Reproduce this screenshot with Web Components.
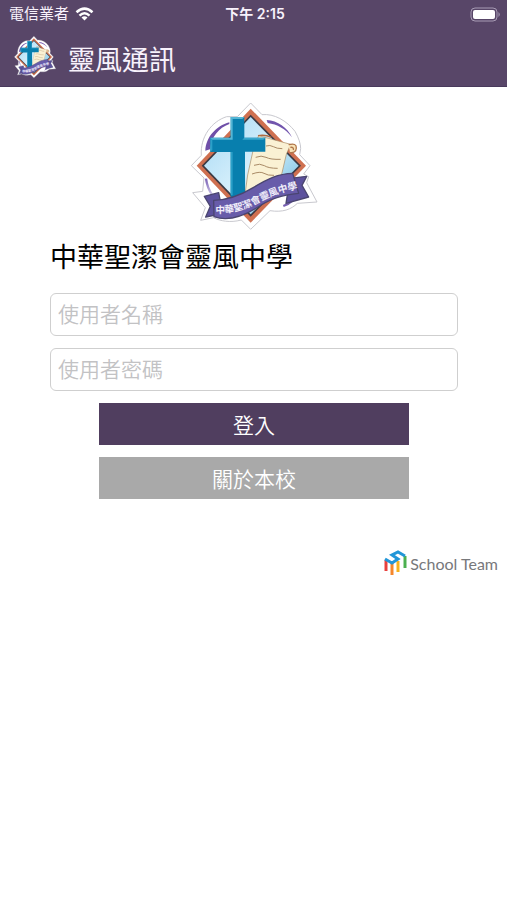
<!DOCTYPE html>
<html lang="zh-Hant">
<head>
<meta charset="utf-8">
<meta name="viewport" content="width=device-width, initial-scale=1">
<title>靈風通訊</title>
<style>
    body {
        margin: 0;
        background: #fff;
        color: #000;
        font-family: "Liberation Sans", "Noto Sans CJK TC", sans-serif;
    }
</style>
</head>
<body>
<login-app></login-app>

<script>
class SchoolCrest extends HTMLElement {
    constructor() {
        super();
        this.attachShadow({ mode: "open" });
    }

    connectedCallback() {
        this.shadowRoot.innerHTML = `
        <style>
            :host { display: block; }
            svg { display: block; width: 100%; height: 100%; }
            text { font: 700 29px "Noto Sans CJK TC", sans-serif; fill: #f1eefa; }
        </style>
        <svg viewBox="30 20 384 384" aria-hidden="true">
            <defs>
                <linearGradient id="sky" x1="0" y1="0" x2="1" y2="1">
                    <stop offset="0" stop-color="#a5d8f4"/>
                    <stop offset=".5" stop-color="#d5effb"/>
                    <stop offset="1" stop-color="#5fb4dc"/>
                </linearGradient>
                <linearGradient id="ring" x1="0" y1="0" x2="1" y2="1">
                    <stop offset="0" stop-color="#7a62b5"/>
                    <stop offset=".35" stop-color="#d3cdec"/>
                    <stop offset="1" stop-color="#6a51a8"/>
                </linearGradient>
                <path id="motto" d="M106 354 C165 356 205 338 245 317 C285 297 315 286 370 278"/>
            </defs>
            <path d="M212 23 L246 58 C282 54 320 76 345 108 Q362 138 362 160 L359 178 L390 211 L371 236 L386 244 L380 262 L411 320 L352 324 C334 342 308 352 270 346 L212 402 L184 374 C150 383 120 377 101 367 L62 375 L76 337 L38 292 L68 288 L72 248 L34 211 L64 180 C60 125 95 78 140 64 L172 64 Z" fill="#fff" stroke="#c9c9cf" stroke-width="3" stroke-linejoin="round"/>
            <path d="M76 166 C78 125 108 92 148 81 L148 86 C116 98 94 124 90 162 Z" fill="#6f4fa8"/>
            <path d="M260 74 C293 76 322 96 336 126 C316 100 292 87 263 83 Z" fill="#7255ad"/>
            <path d="M78 250 Q82 278 96 298 M310 332 Q340 322 352 290" fill="none" stroke="url(#ring)" stroke-width="7"/>
            <path d="M212 40 L378 211 L212 382 L50 211 Z" fill="#cf7050"/>
            <path d="M212 58 L363 211 L212 364 L65 211 Z" fill="#3b3a44"/>
            <path d="M212 65 L356 211 L212 357 L72 211 Z" fill="url(#sky)"/>
            <path d="M236 121 L332 147 L319 177 L300 258 L196 290 L203 239 L219 166 Z" fill="#faf1d4" stroke="#a98a60" stroke-width="2"/>
            <path d="M326 148 Q350 142 349 158 Q348 174 330 172 M331 156 Q342 154 340 164" fill="#f8e3b7" stroke="#b0764a" stroke-width="4"/>
            <path d="M234 121 Q255 117 274 126" fill="none" stroke="#b06a40" stroke-width="4"/>
            <path d="M258 152 q12 -4 22 2 t27 6 M227 186 q17 -7 31 0 t44 6 M222 210 q18 -7 31 1 t40 8 M216 236 q25 -9 36 -2 t30 6" fill="none" stroke="#a98a66" stroke-width="3"/>
            <path d="M152 65 H193 V127 H256 V169 H195 V306 L152 312 V170 H91 V127 H152 Z" fill="#087fae"/>
            <path d="M152 65 H193 L187 71 H158 V133 H96 L91 127 H152 Z" fill="#55b6d5"/>
            <path d="M152 170 H158 V300 H152 Z M91 127 L97 133 V164 L91 170 Z" fill="#2ba0c8"/>
            <path d="M193 127 L187 133 H250 L256 127 Z" fill="#3ba8cd"/>
            <path d="M73 303 L116 292 L128 355 L77 365 L91 333 Z M330 249 L380 243 L366 270 L386 305 L318 324 Z" fill="#5c519d" stroke="#4a4570" stroke-width="4" stroke-linejoin="round"/>
            <path d="M101 315 C150 314 188 296 221 276 C262 251 294 235 338 234 L356 294 C304 299 270 311 229 338 C190 362 143 379 102 364 Z" fill="#685caa" stroke="#4a4570" stroke-width="4" stroke-linejoin="round"/>
            <text><textPath href="#motto">中華聖潔會靈風中學</textPath></text>
        </svg>`;
    }
}

class StatusBar extends HTMLElement {
    constructor() {
        super();
        this.attachShadow({ mode: "open" });
    }

    connectedCallback() {
        this.shadowRoot.innerHTML = `
        <style>
            :host {
                display: grid;
                grid-template-columns: 1fr auto 1fr;
                align-items: center;
                height: 28px;
                padding: 0 6px 0 9px;
                font: 15px/20px Inter, "Noto Sans CJK TC", sans-serif;
            }
            .carrier { display: flex; align-items: center; gap: 6px; }
            .time { font-size: 14px; font-weight: 600; }
            .battery { justify-self: end; }
            svg { display: block; }
        </style>
        <div class="carrier">
            <slot name="carrier"></slot>
            <svg width="19" height="14" viewBox="0 0 19 14" aria-hidden="true">
                <path d="M1.500 5.200 Q9.500 -2 17.500 5.200 M4.500 8.600 Q9.500 4 14.500 8.600" fill="none" stroke="#fff" stroke-width="2.500"/>
                <path d="M6.500 10.600 Q9.500 8 12.500 10.600 L9.500 13.600 Z" fill="#fff"/>
            </svg>
        </div>
        <div class="time"><slot name="time"></slot></div>
        <svg class="battery" width="31" height="15" viewBox="0 0 31 15" aria-hidden="true">
            <rect x="1" y="1" width="26" height="13" rx="4" fill="none" stroke="#a79bb4"/>
            <rect x="3" y="3" width="22" height="9" rx="2" fill="#fff"/>
            <path d="M28.500 5 Q31 7.500 28.500 10 Z" fill="#a79bb4"/>
        </svg>`;
    }
}

class AppHeader extends HTMLElement {
    constructor() {
        super();
        this.attachShadow({ mode: "open" });
    }

    connectedCallback() {
        this.shadowRoot.innerHTML = `
        <style>
            :host {
                display: block;
                background: #584668;
                color: #f8f2fc;
                border-bottom: 1px solid #493a5c;
            }
            .bar {
                display: flex;
                align-items: flex-end;
                gap: 12px;
                height: 50px;
                padding: 0 14px 8px;
            }
            school-crest { width: 42px; height: 42px; }
            h1 { margin: 0; font-size: 27px; line-height: 34px; font-weight: 400; }
        </style>
        <slot name="status"></slot>
        <div class="bar">
            <school-crest></school-crest>
            <h1><slot></slot></h1>
        </div>`;
    }
}

class TextField extends HTMLElement {
    constructor() {
        super();
        this.attachShadow({ mode: "open" });
    }

    connectedCallback() {
        const label = this.getAttribute("label");
        const type = this.getAttribute("type") || "text";
        this.shadowRoot.innerHTML = `
        <style>
            :host { display: block; }
            input {
                display: block;
                box-sizing: border-box;
                width: 100%;
                height: 43px;
                padding: 0 7px;
                border: 1px solid #cfcfcf;
                border-radius: 6px;
                background: #fff;
                color: #000;
                font: inherit;
                font-size: 21px;
                font-weight: 350;
            }
            input::placeholder { color: #c2c2c4; opacity: 1; }
        </style>
        <input type="${type}" aria-label="${label}" placeholder="${label}">`;
    }
}

class ActionButton extends HTMLElement {
    constructor() {
        super();
        this.attachShadow({ mode: "open" });
    }

    connectedCallback() {
        this.shadowRoot.innerHTML = `
        <style>
            :host { display: block; width: 76%; }
            button {
                display: block;
                width: 100%;
                height: 42px;
                padding: 0;
                border: 0;
                background: #503e5f;
                color: #fff;
                font: inherit;
                font-size: 21px;
                font-weight: 350;
                cursor: pointer;
            }
            :host([secondary]) button { background: #a9a9a9; }
        </style>
        <button type="button"><slot></slot></button>`;
    }
}

class TeamLogo extends HTMLElement {
    constructor() {
        super();
        this.attachShadow({ mode: "open" });
    }

    connectedCallback() {
        this.shadowRoot.innerHTML = `
        <style>
            :host {
                display: flex;
                justify-content: flex-end;
                align-items: flex-end;
                gap: 3px;
                color: #77787b;
                font: 16px/24px Lato, sans-serif;
            }
            svg { display: block; }
        </style>
        <svg width="23" height="26" viewBox="0 0 23 26" fill="none" stroke-width="3" aria-hidden="true">
            <path d="M2 10 V21" stroke="#e8403d"/>
            <path d="M8 13 V25" stroke="#f5872c"/>
            <path d="M14 11 V22" stroke="#f7b21d"/>
            <path d="M21 6 V18" stroke="#4cb050"/>
            <path d="M1 9 L8 13 L14 9 L8 5 L14 2 L21 6" stroke="#2196d8"/>
        </svg>
        <span><slot></slot></span>`;
    }
}

class LoginApp extends HTMLElement {
    constructor() {
        super();
        this.attachShadow({ mode: "open" });
    }

    connectedCallback() {
        this.shadowRoot.innerHTML = `
        <style>
            :host { display: block; }
            main {
                display: flex;
                flex-direction: column;
                padding: 15px 49px 0 50px;
            }
            .crest { align-self: center; width: 128px; height: 128px; }
            h2 { margin: 8px 0 15px; font-size: 27px; line-height: 40px; font-weight: 400; }
            form { display: flex; flex-direction: column; align-items: center; gap: 12px; }
            text-field { width: 100%; }
            footer { padding: 51px 9px 0; }
        </style>
        <app-header>
            <status-bar slot="status">
                <span slot="carrier">電信業者</span>
                <span slot="time">下午 2:15</span>
            </status-bar>
            靈風通訊
        </app-header>
        <main>
            <school-crest class="crest"></school-crest>
            <h2>中華聖潔會靈風中學</h2>
            <form>
                <text-field label="使用者名稱"></text-field>
                <text-field label="使用者密碼" type="password"></text-field>
                <action-button>登入</action-button>
                <action-button secondary>關於本校</action-button>
            </form>
        </main>
        <footer><team-logo>School Team</team-logo></footer>`;
    }
}

customElements.define('school-crest', SchoolCrest);
customElements.define('status-bar', StatusBar);
customElements.define('app-header', AppHeader);
customElements.define('text-field', TextField);
customElements.define('action-button', ActionButton);
customElements.define('team-logo', TeamLogo);
customElements.define('login-app', LoginApp);
</script>
</body>
</html>
